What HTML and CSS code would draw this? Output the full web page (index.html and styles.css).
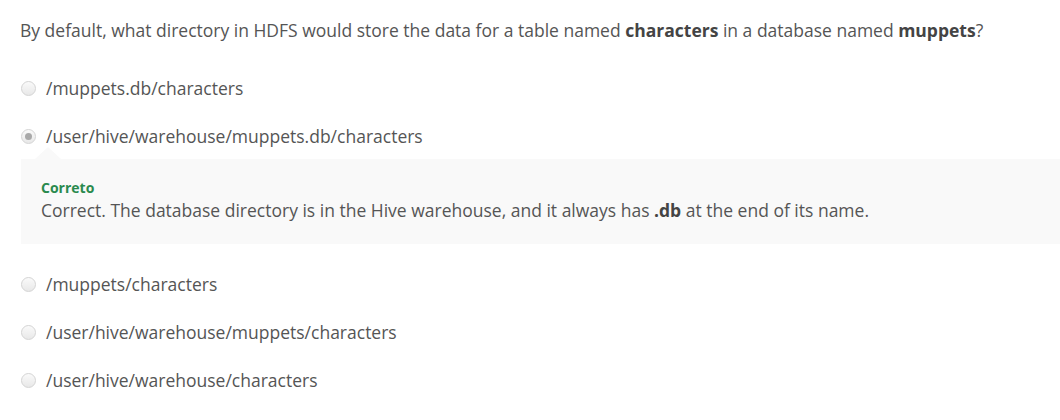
FILE: index.html
```html
<!DOCTYPE html>
<html>
<head>
<meta charset="utf-8">
<link rel="stylesheet" href="styles.css">
</head>
<body>
<div class="quiz">
  <p class="question">By default, what directory in HDFS would store the data for a table named <strong>characters</strong> in a database named <strong>muppets</strong>?</p>
  <ul class="options">
    <li class="option"><span class="radio"></span><span class="label">/muppets.db/characters</span></li>
    <li class="option"><span class="radio checked"></span><span class="label">/user/hive/warehouse/muppets.db/characters</span></li>
    <li class="feedback-wrap">
      <div class="feedback">
        <div class="feedback-title">Correto</div>
        <div class="feedback-text">Correct. The database directory is in the Hive warehouse, and it always has <strong>.db</strong> at the end of its name.</div>
      </div>
    </li>
    <li class="option"><span class="radio"></span><span class="label">/muppets/characters</span></li>
    <li class="option"><span class="radio"></span><span class="label">/user/hive/warehouse/muppets/characters</span></li>
    <li class="option"><span class="radio"></span><span class="label">/user/hive/warehouse/characters</span></li>
  </ul>
</div>
</body>
</html>
```
FILE: styles.css
```css
html, body {
  margin: 0;
  padding: 0;
  background: #fff;
}
body {
  font-family: "Open Sans", "Liberation Sans", sans-serif;
  color: #555;
  font-size: 17.5px;
}
.quiz {
  padding: 18px 0 0 20px;
}
.question {
  margin: 0;
  line-height: 24px;
}
.question strong {
  color: #444;
  font-weight: 700;
}
.options {
  list-style: none;
  margin: 34px 0 0 0;
  padding: 0;
}
.option {
  display: flex;
  align-items: center;
  height: 24px;
  margin-bottom: 24px;
}
.radio {
  flex: none;
  width: 15px;
  height: 15px;
  box-sizing: border-box;
  border-radius: 50%;
  border: 1px solid #d4d4d4;
  background: linear-gradient(#fafafa, #e8e8e8);
  margin-left: 1px;
  margin-right: 10px;
  position: relative;
}
.radio.checked::after {
  content: "";
  position: absolute;
  left: 3px;
  top: 3px;
  width: 7px;
  height: 7px;
  border-radius: 50%;
  background: #a9a9a9;
}
.label {
  line-height: 24px;
}
.feedback-wrap {
  margin: -25px 0 28px 1px;
  padding-top: 12px;
  position: relative;
}
.feedback-wrap::before {
  content: "";
  position: absolute;
  top: 0;
  left: 14px;
  border-left: 13px solid transparent;
  border-right: 13px solid transparent;
  border-bottom: 12px solid #f9f9f9;
}
.feedback {
  background: #f9f9f9;
  padding: 19px 20px 22px 20px;
  height: 85px;
  box-sizing: border-box;
}
.feedback-title {
  color: #2a8a4e;
  font-weight: 700;
  font-size: 14px;
  line-height: 20px;
}
.feedback-text {
  line-height: 24px;
}
.feedback-text strong {
  color: #444;
}
```
